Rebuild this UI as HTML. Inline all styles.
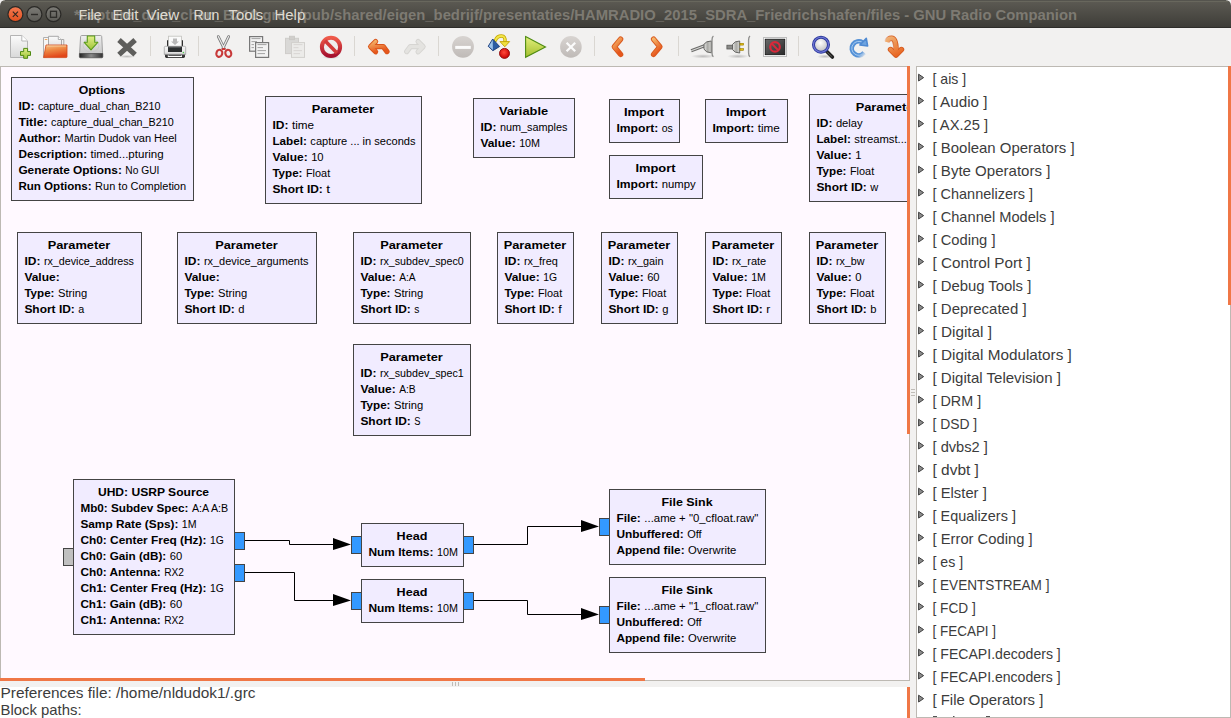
<!DOCTYPE html>
<html><head><meta charset="utf-8"><style>
html,body{margin:0;padding:0;width:1231px;height:718px;overflow:hidden;background:#f2f1f0;}
svg{position:absolute;left:0;top:0;font-family:"Liberation Sans",sans-serif;}
</style></head><body>
<svg width="1231" height="718" viewBox="0 0 1231 718">
<defs>
<linearGradient id="wbC" x1="0" y1="0" x2="0" y2="1"><stop offset="0" stop-color="#f47a52"/><stop offset="1" stop-color="#e2501e"/></linearGradient><linearGradient id="wbG" x1="0" y1="0" x2="0" y2="1"><stop offset="0" stop-color="#7c7b76"/><stop offset="1" stop-color="#5c5b56"/></linearGradient>
<linearGradient id="tb" x1="0" y1="0" x2="0" y2="1"><stop offset="0" stop-color="#5d5b54"/><stop offset="1" stop-color="#3d3c37"/></linearGradient>
</defs>
<rect x="0" y="0" width="1231" height="718" fill="#f2f1f0"/>
<path d="M0,28 L0,6 Q0,0 6,0 L1225,0 Q1231,0 1231,6 L1231,28 Z" fill="url(#tb)"/>
<line x1="5" y1="0.5" x2="1226" y2="0.5" stroke="#55544e" stroke-width="1"/><line x1="3" y1="1.5" x2="1228" y2="1.5" stroke="#68675d" stroke-width="1"/>
<line x1="0" y1="27.5" x2="1231" y2="27.5" stroke="#2e2d2a" stroke-width="1"/>
<!-- window buttons -->
<circle cx="15.4" cy="14.2" r="7.5" fill="url(#wbC)" stroke="#2a2926" stroke-width="1.2"/>
<path d="M12.8,11.6 L18,16.8 M18,11.6 L12.8,16.8" stroke="#2e2620" stroke-width="1.1"/>
<circle cx="34.4" cy="14.2" r="7.5" fill="url(#wbG)" stroke="#2a2926" stroke-width="1.2"/>
<line x1="31" y1="14.5" x2="38" y2="14.5" stroke="#2e2d2a" stroke-width="1.4"/>
<circle cx="53.4" cy="14.2" r="7.5" fill="url(#wbG)" stroke="#2a2926" stroke-width="1.2"/>
<rect x="50.5" y="11.3" width="6" height="6" fill="none" stroke="#2e2d2a" stroke-width="1.3"/>
<text x="74.00" y="20.00" font-size="15.2" font-weight="bold" fill="#7d7a72" text-anchor="start" textLength="1003.00" lengthAdjust="spacingAndGlyphs">*capture_dual_chan_B210.grc - /pub/shared/eigen_bedrijf/presentaties/HAMRADIO_2015_SDRA_Friedrichshafen/files - GNU Radio Companion</text>
<text x="78.50" y="20.00" font-size="14.4" font-weight="normal" fill="#dfdbd2" text-anchor="start" textLength="23.20" lengthAdjust="spacingAndGlyphs">File</text>
<text x="112.50" y="20.00" font-size="14.4" font-weight="normal" fill="#dfdbd2" text-anchor="start" textLength="26.00" lengthAdjust="spacingAndGlyphs">Edit</text>
<text x="146.50" y="20.00" font-size="14.4" font-weight="normal" fill="#dfdbd2" text-anchor="start" textLength="32.81" lengthAdjust="spacingAndGlyphs">View</text>
<text x="193.50" y="20.00" font-size="14.4" font-weight="normal" fill="#dfdbd2" text-anchor="start" textLength="25.88" lengthAdjust="spacingAndGlyphs">Run</text>
<text x="228.50" y="20.00" font-size="14.4" font-weight="normal" fill="#dfdbd2" text-anchor="start" textLength="34.81" lengthAdjust="spacingAndGlyphs">Tools</text>
<text x="274.50" y="20.00" font-size="14.4" font-weight="normal" fill="#dfdbd2" text-anchor="start" textLength="30.73" lengthAdjust="spacingAndGlyphs">Help</text>
<!-- toolbar -->

<defs>
<linearGradient id="gPage" x1="0" y1="0" x2="0" y2="1"><stop offset="0" stop-color="#fbfbfb"/><stop offset="1" stop-color="#d9d9d9"/></linearGradient>
<linearGradient id="gGreen" x1="0" y1="0" x2="0" y2="1"><stop offset="0" stop-color="#e2ef8a"/><stop offset="1" stop-color="#9fc437"/></linearGradient>
<linearGradient id="gFolder" x1="0" y1="0" x2="0.3" y2="1"><stop offset="0" stop-color="#f7c68e"/><stop offset="0.45" stop-color="#ee8a45"/><stop offset="1" stop-color="#e2471a"/></linearGradient>
<linearGradient id="gDrive" x1="0" y1="0" x2="0" y2="1"><stop offset="0" stop-color="#f0f0f0"/><stop offset="1" stop-color="#c8c8c8"/></linearGradient>
<linearGradient id="gDriveBand" x1="0" y1="0" x2="1" y2="0"><stop offset="0" stop-color="#222"/><stop offset="0.5" stop-color="#8a8a8a"/><stop offset="1" stop-color="#333"/></linearGradient>
<linearGradient id="gRed" x1="0" y1="0" x2="0" y2="1"><stop offset="0" stop-color="#ef5a4a"/><stop offset="1" stop-color="#a5102e"/></linearGradient>
<linearGradient id="gOrange" x1="0" y1="0" x2="0.4" y2="1"><stop offset="0" stop-color="#f4b56a"/><stop offset="1" stop-color="#e6561c"/></linearGradient>
<linearGradient id="gGreyC" x1="0" y1="0" x2="0" y2="1"><stop offset="0" stop-color="#d8d4d1"/><stop offset="1" stop-color="#bfbab7"/></linearGradient>
<linearGradient id="gPlay" x1="0" y1="0" x2="0" y2="1"><stop offset="0" stop-color="#e3ef7c"/><stop offset="1" stop-color="#a3bf2e"/></linearGradient>
<linearGradient id="gScreen" x1="0" y1="0" x2="1" y2="1"><stop offset="0" stop-color="#6a6a6a"/><stop offset="1" stop-color="#2a2a2a"/></linearGradient>
<linearGradient id="gPlug" x1="0" y1="0" x2="1" y2="0"><stop offset="0" stop-color="#e8e8e6"/><stop offset="0.5" stop-color="#a8a8a4"/><stop offset="1" stop-color="#d8d8d4"/></linearGradient>
<radialGradient id="gLens" cx="0.45" cy="0.35" r="0.6"><stop offset="0" stop-color="#ffffff"/><stop offset="1" stop-color="#c8c8c8"/></radialGradient>
<radialGradient id="gRedDot" cx="0.45" cy="0.4" r="0.6"><stop offset="0" stop-color="#ff4a3a"/><stop offset="1" stop-color="#c80000"/></radialGradient>
<radialGradient id="gShadow" cx="0.5" cy="0.5" r="0.5"><stop offset="0" stop-color="#000" stop-opacity="0.22"/><stop offset="1" stop-color="#000" stop-opacity="0"/></radialGradient>
</defs>
<g id="icons">
<!-- separators -->
<g stroke="#dad7d2" stroke-width="1">
<line x1="150.5" y1="36" x2="150.5" y2="56"/>
<line x1="198.5" y1="36" x2="198.5" y2="56"/>
<line x1="354.5" y1="36" x2="354.5" y2="56"/>
<line x1="438.5" y1="36" x2="438.5" y2="56"/>
<line x1="594.5" y1="36" x2="594.5" y2="56"/>
<line x1="678.5" y1="36" x2="678.5" y2="56"/>
<line x1="798.5" y1="36" x2="798.5" y2="56"/>
</g>
<!-- new -->
<path d="M10.5,35.5 L21.8,35.5 L27.5,41 L27.5,57.5 L10.5,57.5 Z" fill="url(#gPage)" stroke="#b4b4b4" stroke-width="1"/>
<path d="M21.8,35.5 L21.8,41 L27.5,41" fill="#ffffff" stroke="#b8b8b8" stroke-width="1"/>
<path d="M23.7,48.4 L27.6,48.4 L27.6,51.6 L30.5,51.6 L30.5,55.4 L27.6,55.4 L27.6,58.3 L23.7,58.3 L23.7,55.4 L20.5,55.4 L20.5,51.6 L23.7,51.6 Z" fill="url(#gGreen)" stroke="#4f8a12" stroke-width="1" stroke-linejoin="round"/>
<!-- open -->
<path d="M43.5,37.5 L50,37.5 L50,56 L43.5,57.5 Z" fill="#f6f6f6" stroke="#b0b0b0" stroke-width="1"/>
<rect x="44.8" y="39" width="2.5" height="0.9" fill="#f0a050"/>
<path d="M48.5,36.3 L58.3,36.3 L61.5,39.5 L61.5,50 L48.5,50 Z" fill="url(#gPage)" stroke="#a8a8a8" stroke-width="1"/>
<path d="M58.3,36.3 L58.3,39.5 L61.5,39.5" fill="#fff" stroke="#a8a8a8" stroke-width="0.9"/>
<path d="M61.8,39.5 L63.8,39.5 L63.8,48" fill="none" stroke="#a8a8a8" stroke-width="1"/>
<path d="M46,45 L67,45 L67,56.8 Q67,57.6 66,57.6 L43.6,57.6 Z" fill="url(#gFolder)" stroke="#d2481a" stroke-width="0.8"/>
<path d="M46.6,46 L66,46" stroke="#f8d4a8" stroke-width="0.8"/>
<!-- save (drive) -->
<path d="M81.6,35.5 L100.7,35.5 Q101.5,35.5 101.7,36.5 L102.6,53.5 L79.6,53.5 L80.6,36.5 Q80.8,35.5 81.6,35.5 Z" fill="url(#gDrive)" stroke="#a2a2a2" stroke-width="1"/>
<ellipse cx="91" cy="45.5" rx="8" ry="6.5" fill="none" stroke="#c6c6c6" stroke-width="0.8"/>
<path d="M79.4,53.6 L102.8,53.6 L102.8,56.8 Q102.8,57.8 101.8,57.8 L80.4,57.8 Q79.4,57.8 79.4,56.8 Z" fill="url(#gDriveBand)" stroke="#3a3a3a" stroke-width="0.6"/>
<path d="M87.3,36 L94.7,36 L94.7,42.3 L97.8,42.3 L91,49.8 L84.2,42.3 L87.3,42.3 Z" fill="url(#gGreen)" stroke="#5a9c1a" stroke-width="1.1" stroke-linejoin="round"/>
<!-- close X -->
<ellipse cx="127" cy="56.5" rx="9" ry="1.6" fill="url(#gShadow)"/>
<path d="M119,40 L135.1,54.7 M135.1,40 L119,54.7" stroke="#5e5e5c" stroke-width="5.2" stroke-linecap="butt"/>
<!-- print -->
<rect x="167" y="40" width="16" height="7" fill="#2e2e2e" rx="1"/>
<rect x="168.5" y="36.2" width="13" height="11" fill="#fafafa" stroke="#c0c0bc" stroke-width="0.8"/>
<path d="M173,38.5 L177,38.5 L177,41.5 L179,41.5 L175,45 L171,41.5 L173,41.5 Z" fill="#b8b8b8"/>
<path d="M165,54 L185,54 L185,56.6 Q185,58 183.6,58 L166.4,58 Q165,58 165,56.6 Z" fill="#333"/>
<rect x="167.8" y="55.2" width="14.2" height="1.9" fill="#fff"/>
<rect x="168.6" y="55.2" width="12.6" height="0.7" fill="#222"/>
<linearGradient id="gPrn" x1="0" y1="0" x2="0" y2="1"><stop offset="0" stop-color="#f4f4f4"/><stop offset="0.7" stop-color="#e8e8e8"/><stop offset="1" stop-color="#bdbdbd"/></linearGradient>
<path d="M164.3,47.5 Q164.3,46.3 165.5,46.3 L184.5,46.3 Q185.7,46.3 185.7,47.5 L185.7,54.6 L164.3,54.6 Z" fill="url(#gPrn)" stroke="#9a9a9a" stroke-width="0.7"/>
<rect x="168" y="46.6" width="14" height="5.4" fill="#2c2f30"/>
<rect x="168.6" y="47.2" width="12" height="0.8" fill="#5a5d5e"/>
<circle cx="183.4" cy="52.5" r="0.8" fill="#4ed04e"/>
<!-- cut -->
<path d="M218.3,36.6 L224.2,48.6 M228.6,36.6 L222.8,48.6" stroke="#7a7a7a" stroke-width="2.8" stroke-linecap="round"/>
<path d="M218.3,36.6 L224.2,48.6 M228.6,36.6 L222.8,48.6" stroke="#efefef" stroke-width="1.1" stroke-linecap="round"/>
<ellipse cx="219.3" cy="53.3" rx="2.9" ry="3.6" fill="none" stroke="#c83a3a" stroke-width="2.1" transform="rotate(20 219.3 53.3)"/>
<ellipse cx="228.3" cy="53.3" rx="2.9" ry="3.6" fill="none" stroke="#c83a3a" stroke-width="2.1" transform="rotate(-20 228.3 53.3)"/>
<path d="M222,49 L225.5,49" stroke="#c83a3a" stroke-width="2"/>
<!-- copy -->
<rect x="249.6" y="36.6" width="13" height="14.6" fill="#f2f2f2" stroke="#787878" stroke-width="1.2"/>
<g stroke="#9a9a9a" stroke-width="0.9"><line x1="251.5" y1="38.6" x2="260.5" y2="38.6"/><line x1="251.5" y1="41.6" x2="257" y2="41.6"/><line x1="251.5" y1="44.6" x2="254" y2="44.6"/><line x1="251.5" y1="47.6" x2="254" y2="47.6"/></g>
<rect x="255.6" y="42.6" width="13" height="14.8" fill="#f2f2f2" stroke="#787878" stroke-width="1.2"/>
<g stroke="#9a9a9a" stroke-width="0.9"><line x1="257.5" y1="44.6" x2="266.5" y2="44.6"/><line x1="257.5" y1="47.6" x2="263" y2="47.6"/><line x1="257.5" y1="50.6" x2="266" y2="50.6"/><line x1="257.5" y1="53.6" x2="265" y2="53.6"/></g>
<!-- paste disabled -->
<rect x="285.5" y="38.3" width="13" height="15.3" fill="#d9d8d6" stroke="#cfcdca" stroke-width="1"/>
<rect x="289.5" y="36.2" width="5" height="3.5" fill="#d0cecb" stroke="#c8c6c3" stroke-width="0.8"/>
<rect x="291.5" y="42.6" width="13" height="14.8" fill="#ecebe9" stroke="#d2d0cd" stroke-width="1"/>
<g stroke="#d6d4d1" stroke-width="0.9"><line x1="293.5" y1="44.6" x2="302.5" y2="44.6"/><line x1="293.5" y1="47.6" x2="298.5" y2="47.6"/><line x1="293.5" y1="50.6" x2="302" y2="50.6"/><line x1="293.5" y1="53.6" x2="300" y2="53.6"/></g>
<!-- delete (stop) -->
<ellipse cx="331" cy="57.2" rx="9" ry="1.8" fill="url(#gShadow)"/>
<circle cx="331" cy="46.9" r="9.1" fill="#eeeeee" stroke="url(#gRed)" stroke-width="4"/>
<path d="M325,40.8 L337,53" stroke="#d23a3a" stroke-width="3.6"/>
<!-- undo -->
<path d="M370.8,46.6 L383.3,46.6 L387,51.6 M375.6,41.6 L370.6,46.6 L375.6,51.8" fill="none" stroke="#d9541a" stroke-width="5.2" stroke-linecap="round" stroke-linejoin="round"/>
<path d="M370.8,46.6 L383.3,46.6 L387,51.6 M375.6,41.6 L370.6,46.6 L375.6,51.8" fill="none" stroke="url(#gOrange)" stroke-width="3.4" stroke-linecap="round" stroke-linejoin="round"/>
<!-- redo disabled -->
<path d="M422.9,46.6 L410.4,46.6 L406.7,51.6 M418.1,41.6 L423.1,46.6 L418.1,51.8" fill="none" stroke="#d6d5d2" stroke-width="5.2" stroke-linecap="round" stroke-linejoin="round"/>
<path d="M422.9,46.6 L410.4,46.6 L406.7,51.6 M418.1,41.6 L423.1,46.6 L418.1,51.8" fill="none" stroke="#e4e3e0" stroke-width="3.4" stroke-linecap="round" stroke-linejoin="round"/>
<!-- minus disabled -->
<circle cx="463" cy="46.8" r="10.9" fill="url(#gGreyC)"/>
<rect x="455.2" y="45.9" width="15.6" height="3" fill="#fbfbfb"/>
<!-- generate -->
<path d="M495.5,40.2 Q497,36 501.5,36 Q505.5,36 505,41.5" fill="none" stroke="#c6a800" stroke-width="3.4" stroke-linecap="round"/>
<path d="M495.5,40.2 Q497,36 501.5,36 Q505.5,36 505,41.5" fill="none" stroke="#f2e64a" stroke-width="1.8" stroke-linecap="round"/>
<path d="M500,41.6 L509.6,41.6 L504.8,46.8 Z" fill="#f0e040" stroke="#c0a000" stroke-width="0.9" stroke-linejoin="round"/>
<path d="M488.2,46.3 L492.7,39 L499.6,46.5 L492.9,50.7 Z" fill="#2b5ca2" stroke="#1b3a78" stroke-width="0.9" stroke-linejoin="round"/>
<path d="M488.8,46.3 L492.7,39.8 L492.9,50 Z" fill="#9cc2ea"/>
<circle cx="504.5" cy="53.4" r="5" fill="url(#gRedDot)" stroke="#8a0a0a" stroke-width="0.9"/>
<!-- play -->
<path d="M525.6,36.6 L545.5,46.9 L525.6,57.3 Z" fill="url(#gPlay)" stroke="#4f8c12" stroke-width="1.1" stroke-linejoin="miter"/>
<!-- kill disabled -->
<circle cx="570.9" cy="46.9" r="10.8" fill="url(#gGreyC)"/>
<path d="M566.6,42.8 L575.2,51.2 M575.2,42.8 L566.6,51.2" stroke="#fbfbfb" stroke-width="2.3"/>
<!-- chevrons -->
<path d="M620.6,39.2 L614.3,46.8 L620.6,54.4" fill="none" stroke="#d9581c" stroke-width="5.4" stroke-linecap="round" stroke-linejoin="round"/>
<path d="M620.6,39.2 L614.3,46.8 L620.6,54.4" fill="none" stroke="url(#gOrange)" stroke-width="3.6" stroke-linecap="round" stroke-linejoin="round"/>
<path d="M653.6,39.2 L659.9,46.8 L653.6,54.4" fill="none" stroke="#d9581c" stroke-width="5.4" stroke-linecap="round" stroke-linejoin="round"/>
<path d="M653.6,39.2 L659.9,46.8 L653.6,54.4" fill="none" stroke="url(#gOrange)" stroke-width="3.6" stroke-linecap="round" stroke-linejoin="round"/>
<!-- unplug (connected) -->
<ellipse cx="703" cy="56.3" rx="12" ry="2.2" fill="url(#gShadow)"/>
<path d="M691.2,50.7 L704.5,45.8" stroke="#6a6a68" stroke-width="3.2"/>
<path d="M691.2,50.7 L704.5,45.8" stroke="#d8d8d6" stroke-width="1.2"/>
<path d="M704,44.2 Q706,41 711.3,41 L711.3,52.8 Q706,52.8 704,49.2 Z" fill="url(#gPlug)" stroke="#5a5a58" stroke-width="0.9"/>
<path d="M713.4,36 Q712,37 712,40 L712,53 Q712,56 713.4,56.8" fill="none" stroke="#8a8a88" stroke-width="1.3"/>
<!-- plug -->
<ellipse cx="738" cy="56.3" rx="11" ry="2.2" fill="url(#gShadow)"/>
<rect x="726.9" y="45.2" width="6" height="3.8" fill="#8a8a88" stroke="#5a5a58" stroke-width="0.8"/>
<path d="M732.5,44.4 Q734.5,41 739.7,41 L739.7,53 Q734.5,53 732.5,49.6 Z" fill="url(#gPlug)" stroke="#5a5a58" stroke-width="0.9"/>
<rect x="740" y="43.3" width="3.6" height="1.8" fill="#e0c010" stroke="#9a7a00" stroke-width="0.6"/>
<rect x="740" y="48.6" width="3.6" height="1.8" fill="#e0c010" stroke="#9a7a00" stroke-width="0.6"/>
<path d="M750,36 Q748.6,37 748.6,40 L748.6,53 Q748.6,56 750,56.8" fill="none" stroke="#8a8a88" stroke-width="1.3"/>
<path d="M747.6,40 L747.6,53" stroke="#e8e8e6" stroke-width="1"/>
<!-- error screen -->
<rect x="763.5" y="37.5" width="23" height="19" fill="#ffffff" stroke="#bdbdbd" stroke-width="1"/>
<rect x="765.2" y="39.2" width="19.6" height="15.5" fill="url(#gScreen)" stroke="#111" stroke-width="0.8"/>
<circle cx="775" cy="46.9" r="4.8" fill="none" stroke="#d8283a" stroke-width="2.2"/>
<path d="M771.8,43.6 L778.2,50.2" stroke="#d8283a" stroke-width="2"/>
<!-- find -->
<ellipse cx="825" cy="56.5" rx="8" ry="2" fill="url(#gShadow)"/>
<path d="M826.6,51.2 L832.4,57" stroke="#222" stroke-width="3.6" stroke-linecap="round"/>
<path d="M827.4,52.4 L831.8,56.6" stroke="#6a6a60" stroke-width="0.8"/>
<circle cx="821" cy="44.7" r="6.4" fill="url(#gLens)"/>
<circle cx="821" cy="44.7" r="7.5" fill="none" stroke="#2c3a9c" stroke-width="3"/>
<circle cx="821" cy="44.7" r="7.5" fill="none" stroke="#7076d6" stroke-width="1.1"/>
<!-- refresh -->
<linearGradient id="gFade" gradientUnits="userSpaceOnUse" x1="866" y1="55" x2="856" y2="46"><stop offset="0" stop-color="#5591d6" stop-opacity="0"/><stop offset="0.4" stop-color="#5591d6" stop-opacity="1"/></linearGradient>
<linearGradient id="gFade2" gradientUnits="userSpaceOnUse" x1="866" y1="55" x2="856" y2="46"><stop offset="0" stop-color="#a6cbf2" stop-opacity="0"/><stop offset="0.4" stop-color="#a6cbf2" stop-opacity="1"/></linearGradient>
<path d="M864.2,52.8 A7,7 0 1 1 862.5,42.4" fill="none" stroke="url(#gFade)" stroke-width="4.7"/>
<path d="M864.2,52.8 A7,7 0 1 1 862.5,42.4" fill="none" stroke="url(#gFade2)" stroke-width="1"/>
<path d="M866.3,38.4 L867.6,46 L859.9,45 Z" fill="#6ea4e0" stroke="#4f8ad2" stroke-width="1.6" stroke-linejoin="round"/>
<!-- forward/down arrow -->
<linearGradient id="gOr2" gradientUnits="userSpaceOnUse" x1="886" y1="36" x2="896" y2="57"><stop offset="0" stop-color="#f2bd80"/><stop offset="1" stop-color="#e8621e"/></linearGradient>
<linearGradient id="gTail" gradientUnits="userSpaceOnUse" x1="885" y1="42" x2="891" y2="38"><stop offset="0" stop-color="#d65a1e" stop-opacity="0.1"/><stop offset="1" stop-color="#d65a1e" stop-opacity="1"/></linearGradient>
<path d="M886.8,42 Q888,38.2 891.6,38.2 Q896,38.4 896,50" fill="none" stroke="url(#gTail)" stroke-width="5.6" stroke-linecap="butt"/>
<path d="M890.6,49.6 L896,55 L901.4,49.6" fill="none" stroke="#d65a1e" stroke-width="5.6" stroke-linecap="round" stroke-linejoin="round"/>
<path d="M886.8,42 Q888,38.2 891.6,38.2 Q896,38.4 896,50" fill="none" stroke="url(#gOr2)" stroke-width="3.8" stroke-linecap="butt" opacity="0.95"/>
<path d="M890.6,49.6 L896,55 L901.4,49.6" fill="none" stroke="url(#gOr2)" stroke-width="3.8" stroke-linecap="round" stroke-linejoin="round"/>
<path d="M896,46 L896,53" stroke="url(#gOr2)" stroke-width="3.8"/>
</g>

<!-- canvas -->
<clipPath id="cc"><rect x="1" y="67" width="908" height="613"/></clipPath><rect x="0.5" y="66.5" width="909" height="614" fill="#fff9ff" stroke="#bdb9b3" stroke-width="1"/><g clip-path="url(#cc)"><rect x="11.5" y="77.5" width="182" height="123" fill="#f1ecff" stroke="#444444" stroke-width="1"/>
<text x="102.00" y="93.60" font-size="10.8" font-weight="bold" fill="#000" text-anchor="middle" textLength="46.41" lengthAdjust="spacingAndGlyphs">Options</text>
<text x="18.40" y="109.60" font-size="10.2" font-weight="bold" fill="#000" text-anchor="start" textLength="16.02" lengthAdjust="spacingAndGlyphs">ID:</text>
<text x="37.90" y="109.60" font-size="10.0" font-weight="normal" fill="#000" text-anchor="start" textLength="122.58" lengthAdjust="spacingAndGlyphs">capture_dual_chan_B210</text>
<text x="18.40" y="125.60" font-size="10.2" font-weight="bold" fill="#000" text-anchor="start" textLength="29.23" lengthAdjust="spacingAndGlyphs">Title:</text>
<text x="51.12" y="125.60" font-size="10.0" font-weight="normal" fill="#000" text-anchor="start" textLength="122.58" lengthAdjust="spacingAndGlyphs">capture_dual_chan_B210</text>
<text x="18.40" y="141.60" font-size="10.2" font-weight="bold" fill="#000" text-anchor="start" textLength="42.58" lengthAdjust="spacingAndGlyphs">Author:</text>
<text x="64.46" y="141.60" font-size="10.0" font-weight="normal" fill="#000" text-anchor="start" textLength="112.36" lengthAdjust="spacingAndGlyphs">Martin Dudok van Heel</text>
<text x="18.40" y="157.60" font-size="10.2" font-weight="bold" fill="#000" text-anchor="start" textLength="68.67" lengthAdjust="spacingAndGlyphs">Description:</text>
<text x="90.56" y="157.60" font-size="10.0" font-weight="normal" fill="#000" text-anchor="start" textLength="73.12" lengthAdjust="spacingAndGlyphs">timed...pturing</text>
<text x="18.40" y="173.60" font-size="10.2" font-weight="bold" fill="#000" text-anchor="start" textLength="103.44" lengthAdjust="spacingAndGlyphs">Generate Options:</text>
<text x="125.32" y="173.60" font-size="10.0" font-weight="normal" fill="#000" text-anchor="start" textLength="34.09" lengthAdjust="spacingAndGlyphs">No GUI</text>
<text x="18.40" y="189.60" font-size="10.2" font-weight="bold" fill="#000" text-anchor="start" textLength="73.25" lengthAdjust="spacingAndGlyphs">Run Options:</text>
<text x="95.13" y="189.60" font-size="10.0" font-weight="normal" fill="#000" text-anchor="start" textLength="90.97" lengthAdjust="spacingAndGlyphs">Run to Completion</text>
<rect x="265.5" y="96.5" width="156" height="107" fill="#f1ecff" stroke="#444444" stroke-width="1"/>
<text x="343.00" y="112.60" font-size="10.8" font-weight="bold" fill="#000" text-anchor="middle" textLength="62.70" lengthAdjust="spacingAndGlyphs">Parameter</text>
<text x="272.40" y="128.60" font-size="10.2" font-weight="bold" fill="#000" text-anchor="start" textLength="16.02" lengthAdjust="spacingAndGlyphs">ID:</text>
<text x="291.90" y="128.60" font-size="10.0" font-weight="normal" fill="#000" text-anchor="start" textLength="22.14" lengthAdjust="spacingAndGlyphs">time</text>
<text x="272.40" y="144.60" font-size="10.2" font-weight="bold" fill="#000" text-anchor="start" textLength="34.48" lengthAdjust="spacingAndGlyphs">Label:</text>
<text x="310.37" y="144.60" font-size="10.0" font-weight="normal" fill="#000" text-anchor="start" textLength="105.14" lengthAdjust="spacingAndGlyphs">capture ... in seconds</text>
<text x="272.40" y="160.60" font-size="10.2" font-weight="bold" fill="#000" text-anchor="start" textLength="35.27" lengthAdjust="spacingAndGlyphs">Value:</text>
<text x="311.15" y="160.60" font-size="10.0" font-weight="normal" fill="#000" text-anchor="start" textLength="12.47" lengthAdjust="spacingAndGlyphs">10</text>
<text x="272.40" y="176.60" font-size="10.2" font-weight="bold" fill="#000" text-anchor="start" textLength="30.09" lengthAdjust="spacingAndGlyphs">Type:</text>
<text x="305.98" y="176.60" font-size="10.0" font-weight="normal" fill="#000" text-anchor="start" textLength="24.20" lengthAdjust="spacingAndGlyphs">Float</text>
<text x="272.40" y="192.60" font-size="10.2" font-weight="bold" fill="#000" text-anchor="start" textLength="50.42" lengthAdjust="spacingAndGlyphs">Short ID:</text>
<text x="326.31" y="192.60" font-size="10.0" font-weight="normal" fill="#000" text-anchor="start" textLength="3.84" lengthAdjust="spacingAndGlyphs">t</text>
<rect x="473.5" y="98.5" width="101" height="59" fill="#f1ecff" stroke="#444444" stroke-width="1"/>
<text x="523.50" y="114.60" font-size="10.8" font-weight="bold" fill="#000" text-anchor="middle" textLength="49.17" lengthAdjust="spacingAndGlyphs">Variable</text>
<text x="480.40" y="130.60" font-size="10.2" font-weight="bold" fill="#000" text-anchor="start" textLength="16.02" lengthAdjust="spacingAndGlyphs">ID:</text>
<text x="499.90" y="130.60" font-size="10.0" font-weight="normal" fill="#000" text-anchor="start" textLength="67.59" lengthAdjust="spacingAndGlyphs">num_samples</text>
<text x="480.40" y="146.60" font-size="10.2" font-weight="bold" fill="#000" text-anchor="start" textLength="35.27" lengthAdjust="spacingAndGlyphs">Value:</text>
<text x="519.15" y="146.60" font-size="10.0" font-weight="normal" fill="#000" text-anchor="start" textLength="20.92" lengthAdjust="spacingAndGlyphs">10M</text>
<rect x="609.5" y="99.5" width="70" height="43" fill="#f1ecff" stroke="#444444" stroke-width="1"/>
<text x="644.00" y="115.60" font-size="10.8" font-weight="bold" fill="#000" text-anchor="middle" textLength="40.11" lengthAdjust="spacingAndGlyphs">Import</text>
<text x="616.40" y="131.60" font-size="10.2" font-weight="bold" fill="#000" text-anchor="start" textLength="41.89" lengthAdjust="spacingAndGlyphs">Import:</text>
<text x="661.77" y="131.60" font-size="10.0" font-weight="normal" fill="#000" text-anchor="start" textLength="11.11" lengthAdjust="spacingAndGlyphs">os</text>
<rect x="705.5" y="99.5" width="82" height="43" fill="#f1ecff" stroke="#444444" stroke-width="1"/>
<text x="746.00" y="115.60" font-size="10.8" font-weight="bold" fill="#000" text-anchor="middle" textLength="40.11" lengthAdjust="spacingAndGlyphs">Import</text>
<text x="712.40" y="131.60" font-size="10.2" font-weight="bold" fill="#000" text-anchor="start" textLength="41.89" lengthAdjust="spacingAndGlyphs">Import:</text>
<text x="757.77" y="131.60" font-size="10.0" font-weight="normal" fill="#000" text-anchor="start" textLength="22.14" lengthAdjust="spacingAndGlyphs">time</text>
<rect x="609.5" y="155.5" width="93" height="43" fill="#f1ecff" stroke="#444444" stroke-width="1"/>
<text x="655.50" y="171.60" font-size="10.8" font-weight="bold" fill="#000" text-anchor="middle" textLength="40.11" lengthAdjust="spacingAndGlyphs">Import</text>
<text x="616.40" y="187.60" font-size="10.2" font-weight="bold" fill="#000" text-anchor="start" textLength="41.89" lengthAdjust="spacingAndGlyphs">Import:</text>
<text x="661.77" y="187.60" font-size="10.0" font-weight="normal" fill="#000" text-anchor="start" textLength="33.97" lengthAdjust="spacingAndGlyphs">numpy</text>
<rect x="809.5" y="94.5" width="156" height="107" fill="#f1ecff" stroke="#444444" stroke-width="1"/>
<text x="887.00" y="110.60" font-size="10.8" font-weight="bold" fill="#000" text-anchor="middle" textLength="62.70" lengthAdjust="spacingAndGlyphs">Parameter</text>
<text x="816.40" y="126.60" font-size="10.2" font-weight="bold" fill="#000" text-anchor="start" textLength="16.02" lengthAdjust="spacingAndGlyphs">ID:</text>
<text x="835.90" y="126.60" font-size="10.0" font-weight="normal" fill="#000" text-anchor="start" textLength="26.77" lengthAdjust="spacingAndGlyphs">delay</text>
<text x="816.40" y="142.60" font-size="10.2" font-weight="bold" fill="#000" text-anchor="start" textLength="34.48" lengthAdjust="spacingAndGlyphs">Label:</text>
<text x="854.37" y="142.60" font-size="10.0" font-weight="normal" fill="#000" text-anchor="start" textLength="52.62" lengthAdjust="spacingAndGlyphs">streamst...</text>
<text x="816.40" y="158.60" font-size="10.2" font-weight="bold" fill="#000" text-anchor="start" textLength="35.27" lengthAdjust="spacingAndGlyphs">Value:</text>
<text x="855.15" y="158.60" font-size="10.0" font-weight="normal" fill="#000" text-anchor="start" textLength="6.23" lengthAdjust="spacingAndGlyphs">1</text>
<text x="816.40" y="174.60" font-size="10.2" font-weight="bold" fill="#000" text-anchor="start" textLength="30.09" lengthAdjust="spacingAndGlyphs">Type:</text>
<text x="849.98" y="174.60" font-size="10.0" font-weight="normal" fill="#000" text-anchor="start" textLength="24.20" lengthAdjust="spacingAndGlyphs">Float</text>
<text x="816.40" y="190.60" font-size="10.2" font-weight="bold" fill="#000" text-anchor="start" textLength="50.42" lengthAdjust="spacingAndGlyphs">Short ID:</text>
<text x="870.31" y="190.60" font-size="10.0" font-weight="normal" fill="#000" text-anchor="start" textLength="8.02" lengthAdjust="spacingAndGlyphs">w</text>
<rect x="17.5" y="232.5" width="124" height="91" fill="#f1ecff" stroke="#444444" stroke-width="1"/>
<text x="79.00" y="248.60" font-size="10.8" font-weight="bold" fill="#000" text-anchor="middle" textLength="62.70" lengthAdjust="spacingAndGlyphs">Parameter</text>
<text x="24.40" y="264.60" font-size="10.2" font-weight="bold" fill="#000" text-anchor="start" textLength="16.02" lengthAdjust="spacingAndGlyphs">ID:</text>
<text x="43.90" y="264.60" font-size="10.0" font-weight="normal" fill="#000" text-anchor="start" textLength="90.06" lengthAdjust="spacingAndGlyphs">rx_device_address</text>
<text x="24.40" y="280.60" font-size="10.2" font-weight="bold" fill="#000" text-anchor="start" textLength="35.27" lengthAdjust="spacingAndGlyphs">Value:</text>
<text x="24.40" y="296.60" font-size="10.2" font-weight="bold" fill="#000" text-anchor="start" textLength="30.09" lengthAdjust="spacingAndGlyphs">Type:</text>
<text x="57.98" y="296.60" font-size="10.0" font-weight="normal" fill="#000" text-anchor="start" textLength="29.23" lengthAdjust="spacingAndGlyphs">String</text>
<text x="24.40" y="312.60" font-size="10.2" font-weight="bold" fill="#000" text-anchor="start" textLength="50.42" lengthAdjust="spacingAndGlyphs">Short ID:</text>
<text x="78.31" y="312.60" font-size="10.0" font-weight="normal" fill="#000" text-anchor="start" textLength="6.00" lengthAdjust="spacingAndGlyphs">a</text>
<rect x="177.5" y="232.5" width="139" height="91" fill="#f1ecff" stroke="#444444" stroke-width="1"/>
<text x="246.50" y="248.60" font-size="10.8" font-weight="bold" fill="#000" text-anchor="middle" textLength="62.70" lengthAdjust="spacingAndGlyphs">Parameter</text>
<text x="184.40" y="264.60" font-size="10.2" font-weight="bold" fill="#000" text-anchor="start" textLength="16.02" lengthAdjust="spacingAndGlyphs">ID:</text>
<text x="203.90" y="264.60" font-size="10.0" font-weight="normal" fill="#000" text-anchor="start" textLength="104.58" lengthAdjust="spacingAndGlyphs">rx_device_arguments</text>
<text x="184.40" y="280.60" font-size="10.2" font-weight="bold" fill="#000" text-anchor="start" textLength="35.27" lengthAdjust="spacingAndGlyphs">Value:</text>
<text x="184.40" y="296.60" font-size="10.2" font-weight="bold" fill="#000" text-anchor="start" textLength="30.09" lengthAdjust="spacingAndGlyphs">Type:</text>
<text x="217.98" y="296.60" font-size="10.0" font-weight="normal" fill="#000" text-anchor="start" textLength="29.23" lengthAdjust="spacingAndGlyphs">String</text>
<text x="184.40" y="312.60" font-size="10.2" font-weight="bold" fill="#000" text-anchor="start" textLength="50.42" lengthAdjust="spacingAndGlyphs">Short ID:</text>
<text x="238.31" y="312.60" font-size="10.0" font-weight="normal" fill="#000" text-anchor="start" textLength="6.22" lengthAdjust="spacingAndGlyphs">d</text>
<rect x="353.5" y="232.5" width="117" height="91" fill="#f1ecff" stroke="#444444" stroke-width="1"/>
<text x="411.50" y="248.60" font-size="10.8" font-weight="bold" fill="#000" text-anchor="middle" textLength="62.70" lengthAdjust="spacingAndGlyphs">Parameter</text>
<text x="360.40" y="264.60" font-size="10.2" font-weight="bold" fill="#000" text-anchor="start" textLength="16.02" lengthAdjust="spacingAndGlyphs">ID:</text>
<text x="379.90" y="264.60" font-size="10.0" font-weight="normal" fill="#000" text-anchor="start" textLength="83.94" lengthAdjust="spacingAndGlyphs">rx_subdev_spec0</text>
<text x="360.40" y="280.60" font-size="10.2" font-weight="bold" fill="#000" text-anchor="start" textLength="35.27" lengthAdjust="spacingAndGlyphs">Value:</text>
<text x="399.15" y="280.60" font-size="10.0" font-weight="normal" fill="#000" text-anchor="start" textLength="16.53" lengthAdjust="spacingAndGlyphs">A:A</text>
<text x="360.40" y="296.60" font-size="10.2" font-weight="bold" fill="#000" text-anchor="start" textLength="30.09" lengthAdjust="spacingAndGlyphs">Type:</text>
<text x="393.98" y="296.60" font-size="10.0" font-weight="normal" fill="#000" text-anchor="start" textLength="29.23" lengthAdjust="spacingAndGlyphs">String</text>
<text x="360.40" y="312.60" font-size="10.2" font-weight="bold" fill="#000" text-anchor="start" textLength="50.42" lengthAdjust="spacingAndGlyphs">Short ID:</text>
<text x="414.31" y="312.60" font-size="10.0" font-weight="normal" fill="#000" text-anchor="start" textLength="5.11" lengthAdjust="spacingAndGlyphs">s</text>
<rect x="497.5" y="232.5" width="76" height="91" fill="#f1ecff" stroke="#444444" stroke-width="1"/>
<text x="535.00" y="248.60" font-size="10.8" font-weight="bold" fill="#000" text-anchor="middle" textLength="62.70" lengthAdjust="spacingAndGlyphs">Parameter</text>
<text x="504.40" y="264.60" font-size="10.2" font-weight="bold" fill="#000" text-anchor="start" textLength="16.02" lengthAdjust="spacingAndGlyphs">ID:</text>
<text x="523.90" y="264.60" font-size="10.0" font-weight="normal" fill="#000" text-anchor="start" textLength="33.98" lengthAdjust="spacingAndGlyphs">rx_freq</text>
<text x="504.40" y="280.60" font-size="10.2" font-weight="bold" fill="#000" text-anchor="start" textLength="35.27" lengthAdjust="spacingAndGlyphs">Value:</text>
<text x="543.15" y="280.60" font-size="10.0" font-weight="normal" fill="#000" text-anchor="start" textLength="13.83" lengthAdjust="spacingAndGlyphs">1G</text>
<text x="504.40" y="296.60" font-size="10.2" font-weight="bold" fill="#000" text-anchor="start" textLength="30.09" lengthAdjust="spacingAndGlyphs">Type:</text>
<text x="537.98" y="296.60" font-size="10.0" font-weight="normal" fill="#000" text-anchor="start" textLength="24.20" lengthAdjust="spacingAndGlyphs">Float</text>
<text x="504.40" y="312.60" font-size="10.2" font-weight="bold" fill="#000" text-anchor="start" textLength="50.42" lengthAdjust="spacingAndGlyphs">Short ID:</text>
<text x="558.31" y="312.60" font-size="10.0" font-weight="normal" fill="#000" text-anchor="start" textLength="3.45" lengthAdjust="spacingAndGlyphs">f</text>
<rect x="601.5" y="232.5" width="76" height="91" fill="#f1ecff" stroke="#444444" stroke-width="1"/>
<text x="639.00" y="248.60" font-size="10.8" font-weight="bold" fill="#000" text-anchor="middle" textLength="62.70" lengthAdjust="spacingAndGlyphs">Parameter</text>
<text x="608.40" y="264.60" font-size="10.2" font-weight="bold" fill="#000" text-anchor="start" textLength="16.02" lengthAdjust="spacingAndGlyphs">ID:</text>
<text x="627.90" y="264.60" font-size="10.0" font-weight="normal" fill="#000" text-anchor="start" textLength="35.61" lengthAdjust="spacingAndGlyphs">rx_gain</text>
<text x="608.40" y="280.60" font-size="10.2" font-weight="bold" fill="#000" text-anchor="start" textLength="35.27" lengthAdjust="spacingAndGlyphs">Value:</text>
<text x="647.15" y="280.60" font-size="10.0" font-weight="normal" fill="#000" text-anchor="start" textLength="12.47" lengthAdjust="spacingAndGlyphs">60</text>
<text x="608.40" y="296.60" font-size="10.2" font-weight="bold" fill="#000" text-anchor="start" textLength="30.09" lengthAdjust="spacingAndGlyphs">Type:</text>
<text x="641.98" y="296.60" font-size="10.0" font-weight="normal" fill="#000" text-anchor="start" textLength="24.20" lengthAdjust="spacingAndGlyphs">Float</text>
<text x="608.40" y="312.60" font-size="10.2" font-weight="bold" fill="#000" text-anchor="start" textLength="50.42" lengthAdjust="spacingAndGlyphs">Short ID:</text>
<text x="662.31" y="312.60" font-size="10.0" font-weight="normal" fill="#000" text-anchor="start" textLength="6.22" lengthAdjust="spacingAndGlyphs">g</text>
<rect x="705.5" y="232.5" width="76" height="91" fill="#f1ecff" stroke="#444444" stroke-width="1"/>
<text x="743.00" y="248.60" font-size="10.8" font-weight="bold" fill="#000" text-anchor="middle" textLength="62.70" lengthAdjust="spacingAndGlyphs">Parameter</text>
<text x="712.40" y="264.60" font-size="10.2" font-weight="bold" fill="#000" text-anchor="start" textLength="16.02" lengthAdjust="spacingAndGlyphs">ID:</text>
<text x="731.90" y="264.60" font-size="10.0" font-weight="normal" fill="#000" text-anchor="start" textLength="34.38" lengthAdjust="spacingAndGlyphs">rx_rate</text>
<text x="712.40" y="280.60" font-size="10.2" font-weight="bold" fill="#000" text-anchor="start" textLength="35.27" lengthAdjust="spacingAndGlyphs">Value:</text>
<text x="751.15" y="280.60" font-size="10.0" font-weight="normal" fill="#000" text-anchor="start" textLength="14.69" lengthAdjust="spacingAndGlyphs">1M</text>
<text x="712.40" y="296.60" font-size="10.2" font-weight="bold" fill="#000" text-anchor="start" textLength="30.09" lengthAdjust="spacingAndGlyphs">Type:</text>
<text x="745.98" y="296.60" font-size="10.0" font-weight="normal" fill="#000" text-anchor="start" textLength="24.20" lengthAdjust="spacingAndGlyphs">Float</text>
<text x="712.40" y="312.60" font-size="10.2" font-weight="bold" fill="#000" text-anchor="start" textLength="50.42" lengthAdjust="spacingAndGlyphs">Short ID:</text>
<text x="766.31" y="312.60" font-size="10.0" font-weight="normal" fill="#000" text-anchor="start" textLength="4.03" lengthAdjust="spacingAndGlyphs">r</text>
<rect x="809.5" y="232.5" width="76" height="91" fill="#f1ecff" stroke="#444444" stroke-width="1"/>
<text x="847.00" y="248.60" font-size="10.8" font-weight="bold" fill="#000" text-anchor="middle" textLength="62.70" lengthAdjust="spacingAndGlyphs">Parameter</text>
<text x="816.40" y="264.60" font-size="10.2" font-weight="bold" fill="#000" text-anchor="start" textLength="16.02" lengthAdjust="spacingAndGlyphs">ID:</text>
<text x="835.90" y="264.60" font-size="10.0" font-weight="normal" fill="#000" text-anchor="start" textLength="28.70" lengthAdjust="spacingAndGlyphs">rx_bw</text>
<text x="816.40" y="280.60" font-size="10.2" font-weight="bold" fill="#000" text-anchor="start" textLength="35.27" lengthAdjust="spacingAndGlyphs">Value:</text>
<text x="855.15" y="280.60" font-size="10.0" font-weight="normal" fill="#000" text-anchor="start" textLength="6.23" lengthAdjust="spacingAndGlyphs">0</text>
<text x="816.40" y="296.60" font-size="10.2" font-weight="bold" fill="#000" text-anchor="start" textLength="30.09" lengthAdjust="spacingAndGlyphs">Type:</text>
<text x="849.98" y="296.60" font-size="10.0" font-weight="normal" fill="#000" text-anchor="start" textLength="24.20" lengthAdjust="spacingAndGlyphs">Float</text>
<text x="816.40" y="312.60" font-size="10.2" font-weight="bold" fill="#000" text-anchor="start" textLength="50.42" lengthAdjust="spacingAndGlyphs">Short ID:</text>
<text x="870.31" y="312.60" font-size="10.0" font-weight="normal" fill="#000" text-anchor="start" textLength="6.22" lengthAdjust="spacingAndGlyphs">b</text>
<rect x="353.5" y="344.5" width="117" height="91" fill="#f1ecff" stroke="#444444" stroke-width="1"/>
<text x="411.50" y="360.60" font-size="10.8" font-weight="bold" fill="#000" text-anchor="middle" textLength="62.70" lengthAdjust="spacingAndGlyphs">Parameter</text>
<text x="360.40" y="376.60" font-size="10.2" font-weight="bold" fill="#000" text-anchor="start" textLength="16.02" lengthAdjust="spacingAndGlyphs">ID:</text>
<text x="379.90" y="376.60" font-size="10.0" font-weight="normal" fill="#000" text-anchor="start" textLength="83.94" lengthAdjust="spacingAndGlyphs">rx_subdev_spec1</text>
<text x="360.40" y="392.60" font-size="10.2" font-weight="bold" fill="#000" text-anchor="start" textLength="35.27" lengthAdjust="spacingAndGlyphs">Value:</text>
<text x="399.15" y="392.60" font-size="10.0" font-weight="normal" fill="#000" text-anchor="start" textLength="16.55" lengthAdjust="spacingAndGlyphs">A:B</text>
<text x="360.40" y="408.60" font-size="10.2" font-weight="bold" fill="#000" text-anchor="start" textLength="30.09" lengthAdjust="spacingAndGlyphs">Type:</text>
<text x="393.98" y="408.60" font-size="10.0" font-weight="normal" fill="#000" text-anchor="start" textLength="29.23" lengthAdjust="spacingAndGlyphs">String</text>
<text x="360.40" y="424.60" font-size="10.2" font-weight="bold" fill="#000" text-anchor="start" textLength="50.42" lengthAdjust="spacingAndGlyphs">Short ID:</text>
<text x="414.31" y="424.60" font-size="10.0" font-weight="normal" fill="#000" text-anchor="start" textLength="6.22" lengthAdjust="spacingAndGlyphs">S</text>
<rect x="73.5" y="479.5" width="161" height="155" fill="#f1ecff" stroke="#444444" stroke-width="1"/>
<text x="153.50" y="495.60" font-size="10.8" font-weight="bold" fill="#000" text-anchor="middle" textLength="111.17" lengthAdjust="spacingAndGlyphs">UHD: USRP Source</text>
<text x="80.40" y="511.60" font-size="10.2" font-weight="bold" fill="#000" text-anchor="start" textLength="108.03" lengthAdjust="spacingAndGlyphs">Mb0: Subdev Spec:</text>
<text x="191.92" y="511.60" font-size="10.0" font-weight="normal" fill="#000" text-anchor="start" textLength="36.19" lengthAdjust="spacingAndGlyphs">A:A A:B</text>
<text x="80.40" y="527.60" font-size="10.2" font-weight="bold" fill="#000" text-anchor="start" textLength="97.98" lengthAdjust="spacingAndGlyphs">Samp Rate (Sps):</text>
<text x="181.87" y="527.60" font-size="10.0" font-weight="normal" fill="#000" text-anchor="start" textLength="14.69" lengthAdjust="spacingAndGlyphs">1M</text>
<text x="80.40" y="543.60" font-size="10.2" font-weight="bold" fill="#000" text-anchor="start" textLength="126.05" lengthAdjust="spacingAndGlyphs">Ch0: Center Freq (Hz):</text>
<text x="209.93" y="543.60" font-size="10.0" font-weight="normal" fill="#000" text-anchor="start" textLength="13.83" lengthAdjust="spacingAndGlyphs">1G</text>
<text x="80.40" y="559.60" font-size="10.2" font-weight="bold" fill="#000" text-anchor="start" textLength="85.83" lengthAdjust="spacingAndGlyphs">Ch0: Gain (dB):</text>
<text x="169.71" y="559.60" font-size="10.0" font-weight="normal" fill="#000" text-anchor="start" textLength="12.47" lengthAdjust="spacingAndGlyphs">60</text>
<text x="80.40" y="575.60" font-size="10.2" font-weight="bold" fill="#000" text-anchor="start" textLength="80.33" lengthAdjust="spacingAndGlyphs">Ch0: Antenna:</text>
<text x="164.21" y="575.60" font-size="10.0" font-weight="normal" fill="#000" text-anchor="start" textLength="19.77" lengthAdjust="spacingAndGlyphs">RX2</text>
<text x="80.40" y="591.60" font-size="10.2" font-weight="bold" fill="#000" text-anchor="start" textLength="126.05" lengthAdjust="spacingAndGlyphs">Ch1: Center Freq (Hz):</text>
<text x="209.93" y="591.60" font-size="10.0" font-weight="normal" fill="#000" text-anchor="start" textLength="13.83" lengthAdjust="spacingAndGlyphs">1G</text>
<text x="80.40" y="607.60" font-size="10.2" font-weight="bold" fill="#000" text-anchor="start" textLength="85.83" lengthAdjust="spacingAndGlyphs">Ch1: Gain (dB):</text>
<text x="169.71" y="607.60" font-size="10.0" font-weight="normal" fill="#000" text-anchor="start" textLength="12.47" lengthAdjust="spacingAndGlyphs">60</text>
<text x="80.40" y="623.60" font-size="10.2" font-weight="bold" fill="#000" text-anchor="start" textLength="80.33" lengthAdjust="spacingAndGlyphs">Ch1: Antenna:</text>
<text x="164.21" y="623.60" font-size="10.0" font-weight="normal" fill="#000" text-anchor="start" textLength="19.77" lengthAdjust="spacingAndGlyphs">RX2</text>
<rect x="63.5" y="548.5" width="10" height="17" fill="#c0c0c0" stroke="#444444" stroke-width="1"/>
<rect x="234.5" y="532.5" width="10" height="17" fill="#3399ff" stroke="#444444" stroke-width="1"/>
<rect x="234.5" y="564.5" width="10" height="17" fill="#3399ff" stroke="#444444" stroke-width="1"/>
<rect x="361.5" y="523.5" width="102" height="43" fill="#f1ecff" stroke="#444444" stroke-width="1"/>
<text x="412.00" y="539.60" font-size="10.8" font-weight="bold" fill="#000" text-anchor="middle" textLength="30.78" lengthAdjust="spacingAndGlyphs">Head</text>
<text x="368.40" y="555.60" font-size="10.2" font-weight="bold" fill="#000" text-anchor="start" textLength="65.06" lengthAdjust="spacingAndGlyphs">Num Items:</text>
<text x="436.95" y="555.60" font-size="10.0" font-weight="normal" fill="#000" text-anchor="start" textLength="20.92" lengthAdjust="spacingAndGlyphs">10M</text>
<rect x="361.5" y="579.5" width="102" height="43" fill="#f1ecff" stroke="#444444" stroke-width="1"/>
<text x="412.00" y="595.60" font-size="10.8" font-weight="bold" fill="#000" text-anchor="middle" textLength="30.78" lengthAdjust="spacingAndGlyphs">Head</text>
<text x="368.40" y="611.60" font-size="10.2" font-weight="bold" fill="#000" text-anchor="start" textLength="65.06" lengthAdjust="spacingAndGlyphs">Num Items:</text>
<text x="436.95" y="611.60" font-size="10.0" font-weight="normal" fill="#000" text-anchor="start" textLength="20.92" lengthAdjust="spacingAndGlyphs">10M</text>
<rect x="351.5" y="536.5" width="10" height="17" fill="#3399ff" stroke="#444444" stroke-width="1"/>
<rect x="463.5" y="536.5" width="10" height="17" fill="#3399ff" stroke="#444444" stroke-width="1"/>
<rect x="351.5" y="592.5" width="10" height="17" fill="#3399ff" stroke="#444444" stroke-width="1"/>
<rect x="463.5" y="592.5" width="10" height="17" fill="#3399ff" stroke="#444444" stroke-width="1"/>
<rect x="609.5" y="489.5" width="156" height="75" fill="#f1ecff" stroke="#444444" stroke-width="1"/>
<text x="687.00" y="505.60" font-size="10.8" font-weight="bold" fill="#000" text-anchor="middle" textLength="51.20" lengthAdjust="spacingAndGlyphs">File Sink</text>
<text x="616.40" y="521.60" font-size="10.2" font-weight="bold" fill="#000" text-anchor="start" textLength="24.45" lengthAdjust="spacingAndGlyphs">File:</text>
<text x="644.34" y="521.60" font-size="10.0" font-weight="normal" fill="#000" text-anchor="start" textLength="114.03" lengthAdjust="spacingAndGlyphs">...ame + &quot;0_cfloat.raw&quot;</text>
<text x="616.40" y="537.60" font-size="10.2" font-weight="bold" fill="#000" text-anchor="start" textLength="67.28" lengthAdjust="spacingAndGlyphs">Unbuffered:</text>
<text x="687.17" y="537.60" font-size="10.0" font-weight="normal" fill="#000" text-anchor="start" textLength="14.47" lengthAdjust="spacingAndGlyphs">Off</text>
<text x="616.40" y="553.60" font-size="10.2" font-weight="bold" fill="#000" text-anchor="start" textLength="68.20" lengthAdjust="spacingAndGlyphs">Append file:</text>
<text x="688.09" y="553.60" font-size="10.0" font-weight="normal" fill="#000" text-anchor="start" textLength="48.22" lengthAdjust="spacingAndGlyphs">Overwrite</text>
<rect x="609.5" y="577.5" width="156" height="75" fill="#f1ecff" stroke="#444444" stroke-width="1"/>
<text x="687.00" y="593.60" font-size="10.8" font-weight="bold" fill="#000" text-anchor="middle" textLength="51.20" lengthAdjust="spacingAndGlyphs">File Sink</text>
<text x="616.40" y="609.60" font-size="10.2" font-weight="bold" fill="#000" text-anchor="start" textLength="24.45" lengthAdjust="spacingAndGlyphs">File:</text>
<text x="644.34" y="609.60" font-size="10.0" font-weight="normal" fill="#000" text-anchor="start" textLength="114.03" lengthAdjust="spacingAndGlyphs">...ame + &quot;1_cfloat.raw&quot;</text>
<text x="616.40" y="625.60" font-size="10.2" font-weight="bold" fill="#000" text-anchor="start" textLength="67.28" lengthAdjust="spacingAndGlyphs">Unbuffered:</text>
<text x="687.17" y="625.60" font-size="10.0" font-weight="normal" fill="#000" text-anchor="start" textLength="14.47" lengthAdjust="spacingAndGlyphs">Off</text>
<text x="616.40" y="641.60" font-size="10.2" font-weight="bold" fill="#000" text-anchor="start" textLength="68.20" lengthAdjust="spacingAndGlyphs">Append file:</text>
<text x="688.09" y="641.60" font-size="10.0" font-weight="normal" fill="#000" text-anchor="start" textLength="48.22" lengthAdjust="spacingAndGlyphs">Overwrite</text>
<rect x="599.5" y="518.5" width="10" height="17" fill="#3399ff" stroke="#444444" stroke-width="1"/>
<rect x="599.5" y="606.5" width="10" height="17" fill="#3399ff" stroke="#444444" stroke-width="1"/>
<polyline points="245,540.5 289.5,540.5 289.5,544.5 333,544.5" fill="none" stroke="#000" stroke-width="1"/>
<polygon points="333,538 333,550 351,544.5" fill="#000"/>
<polyline points="245,572.5 294.5,572.5 294.5,600.5 333,600.5" fill="none" stroke="#000" stroke-width="1"/>
<polygon points="333,594 333,606 351,600.5" fill="#000"/>
<polyline points="474,544.5 527.5,544.5 527.5,526.5 581,526.5" fill="none" stroke="#000" stroke-width="1"/>
<polygon points="581,520 581,532 599,526.5" fill="#000"/>
<polyline points="474,600.5 527.5,600.5 527.5,614.5 581,614.5" fill="none" stroke="#000" stroke-width="1"/>
<polygon points="581,608 581,620 599,614.5" fill="#000"/></g>
<rect x="907" y="66" width="3" height="368" fill="#f07746"/>
<rect x="0" y="678" width="645" height="3" fill="#f07746"/>
<g fill="#bfbcb7"><rect x="452" y="682" width="1" height="4"/><rect x="455" y="682" width="1" height="4"/><rect x="458" y="682" width="1" height="4"/>
<rect x="911" y="389" width="4" height="1"/><rect x="911" y="392" width="4" height="1"/><rect x="911" y="395" width="4" height="1"/></g>
<!-- log -->
<rect x="0" y="687" width="910" height="31" fill="#ffffff"/>
<rect x="907" y="687" width="3" height="31" fill="#f07746"/>
<text x="0.50" y="698.30" font-size="14.6" font-weight="normal" fill="#3c3c3c" text-anchor="start" textLength="255.00" lengthAdjust="spacingAndGlyphs">Preferences file: /home/nldudok1/.grc</text>
<text x="0.50" y="715.30" font-size="14.6" font-weight="normal" fill="#3c3c3c" text-anchor="start" textLength="81.12" lengthAdjust="spacingAndGlyphs">Block paths:</text>
<!-- tree panel -->
<rect x="916.5" y="66.5" width="314" height="651" fill="#ffffff" stroke="#bdb9b3" stroke-width="1"/>
<svg x="917" y="67" width="313" height="650" viewBox="917 67 313 650">
<polygon points="918.6,74.2 918.6,81.0 923.6,77.6" fill="#8c8c8c" stroke="#3e3e3e" stroke-width="1" stroke-linejoin="miter"/>
<text x="932.50" y="84.00" font-size="14.4" font-weight="normal" fill="#3c3c3c" text-anchor="start" textLength="33.72" lengthAdjust="spacingAndGlyphs">[ ais ]</text>
<polygon points="918.6,97.2 918.6,104.0 923.6,100.6" fill="#8c8c8c" stroke="#3e3e3e" stroke-width="1" stroke-linejoin="miter"/>
<text x="932.50" y="107.00" font-size="14.4" font-weight="normal" fill="#3c3c3c" text-anchor="start" textLength="55.05" lengthAdjust="spacingAndGlyphs">[ Audio ]</text>
<polygon points="918.6,120.2 918.6,127.0 923.6,123.6" fill="#8c8c8c" stroke="#3e3e3e" stroke-width="1" stroke-linejoin="miter"/>
<text x="932.50" y="130.00" font-size="14.4" font-weight="normal" fill="#3c3c3c" text-anchor="start" textLength="55.70" lengthAdjust="spacingAndGlyphs">[ AX.25 ]</text>
<polygon points="918.6,143.2 918.6,150.0 923.6,146.6" fill="#8c8c8c" stroke="#3e3e3e" stroke-width="1" stroke-linejoin="miter"/>
<text x="932.50" y="153.00" font-size="14.4" font-weight="normal" fill="#3c3c3c" text-anchor="start" textLength="142.15" lengthAdjust="spacingAndGlyphs">[ Boolean Operators ]</text>
<polygon points="918.6,166.2 918.6,173.0 923.6,169.6" fill="#8c8c8c" stroke="#3e3e3e" stroke-width="1" stroke-linejoin="miter"/>
<text x="932.50" y="176.00" font-size="14.4" font-weight="normal" fill="#3c3c3c" text-anchor="start" textLength="117.83" lengthAdjust="spacingAndGlyphs">[ Byte Operators ]</text>
<polygon points="918.6,189.2 918.6,196.0 923.6,192.6" fill="#8c8c8c" stroke="#3e3e3e" stroke-width="1" stroke-linejoin="miter"/>
<text x="932.50" y="199.00" font-size="14.4" font-weight="normal" fill="#3c3c3c" text-anchor="start" textLength="100.53" lengthAdjust="spacingAndGlyphs">[ Channelizers ]</text>
<polygon points="918.6,212.2 918.6,219.0 923.6,215.6" fill="#8c8c8c" stroke="#3e3e3e" stroke-width="1" stroke-linejoin="miter"/>
<text x="932.50" y="222.00" font-size="14.4" font-weight="normal" fill="#3c3c3c" text-anchor="start" textLength="122.08" lengthAdjust="spacingAndGlyphs">[ Channel Models ]</text>
<polygon points="918.6,235.2 918.6,242.0 923.6,238.6" fill="#8c8c8c" stroke="#3e3e3e" stroke-width="1" stroke-linejoin="miter"/>
<text x="932.50" y="245.00" font-size="14.4" font-weight="normal" fill="#3c3c3c" text-anchor="start" textLength="62.98" lengthAdjust="spacingAndGlyphs">[ Coding ]</text>
<polygon points="918.6,258.2 918.6,265.0 923.6,261.6" fill="#8c8c8c" stroke="#3e3e3e" stroke-width="1" stroke-linejoin="miter"/>
<text x="932.50" y="268.00" font-size="14.4" font-weight="normal" fill="#3c3c3c" text-anchor="start" textLength="98.27" lengthAdjust="spacingAndGlyphs">[ Control Port ]</text>
<polygon points="918.6,281.2 918.6,288.0 923.6,284.6" fill="#8c8c8c" stroke="#3e3e3e" stroke-width="1" stroke-linejoin="miter"/>
<text x="932.50" y="291.00" font-size="14.4" font-weight="normal" fill="#3c3c3c" text-anchor="start" textLength="98.79" lengthAdjust="spacingAndGlyphs">[ Debug Tools ]</text>
<polygon points="918.6,304.2 918.6,311.0 923.6,307.6" fill="#8c8c8c" stroke="#3e3e3e" stroke-width="1" stroke-linejoin="miter"/>
<text x="932.50" y="314.00" font-size="14.4" font-weight="normal" fill="#3c3c3c" text-anchor="start" textLength="94.10" lengthAdjust="spacingAndGlyphs">[ Deprecated ]</text>
<polygon points="918.6,327.2 918.6,334.0 923.6,330.6" fill="#8c8c8c" stroke="#3e3e3e" stroke-width="1" stroke-linejoin="miter"/>
<text x="932.50" y="337.00" font-size="14.4" font-weight="normal" fill="#3c3c3c" text-anchor="start" textLength="59.47" lengthAdjust="spacingAndGlyphs">[ Digital ]</text>
<polygon points="918.6,350.2 918.6,357.0 923.6,353.6" fill="#8c8c8c" stroke="#3e3e3e" stroke-width="1" stroke-linejoin="miter"/>
<text x="932.50" y="360.00" font-size="14.4" font-weight="normal" fill="#3c3c3c" text-anchor="start" textLength="139.36" lengthAdjust="spacingAndGlyphs">[ Digital Modulators ]</text>
<polygon points="918.6,373.2 918.6,380.0 923.6,376.6" fill="#8c8c8c" stroke="#3e3e3e" stroke-width="1" stroke-linejoin="miter"/>
<text x="932.50" y="383.00" font-size="14.4" font-weight="normal" fill="#3c3c3c" text-anchor="start" textLength="128.43" lengthAdjust="spacingAndGlyphs">[ Digital Television ]</text>
<polygon points="918.6,396.2 918.6,403.0 923.6,399.6" fill="#8c8c8c" stroke="#3e3e3e" stroke-width="1" stroke-linejoin="miter"/>
<text x="932.50" y="406.00" font-size="14.4" font-weight="normal" fill="#3c3c3c" text-anchor="start" textLength="48.62" lengthAdjust="spacingAndGlyphs">[ DRM ]</text>
<polygon points="918.6,419.2 918.6,426.0 923.6,422.6" fill="#8c8c8c" stroke="#3e3e3e" stroke-width="1" stroke-linejoin="miter"/>
<text x="932.50" y="429.00" font-size="14.4" font-weight="normal" fill="#3c3c3c" text-anchor="start" textLength="44.74" lengthAdjust="spacingAndGlyphs">[ DSD ]</text>
<polygon points="918.6,442.2 918.6,449.0 923.6,445.6" fill="#8c8c8c" stroke="#3e3e3e" stroke-width="1" stroke-linejoin="miter"/>
<text x="932.50" y="452.00" font-size="14.4" font-weight="normal" fill="#3c3c3c" text-anchor="start" textLength="55.38" lengthAdjust="spacingAndGlyphs">[ dvbs2 ]</text>
<polygon points="918.6,465.2 918.6,472.0 923.6,468.6" fill="#8c8c8c" stroke="#3e3e3e" stroke-width="1" stroke-linejoin="miter"/>
<text x="932.50" y="475.00" font-size="14.4" font-weight="normal" fill="#3c3c3c" text-anchor="start" textLength="46.43" lengthAdjust="spacingAndGlyphs">[ dvbt ]</text>
<polygon points="918.6,488.2 918.6,495.0 923.6,491.6" fill="#8c8c8c" stroke="#3e3e3e" stroke-width="1" stroke-linejoin="miter"/>
<text x="932.50" y="498.00" font-size="14.4" font-weight="normal" fill="#3c3c3c" text-anchor="start" textLength="54.25" lengthAdjust="spacingAndGlyphs">[ Elster ]</text>
<polygon points="918.6,511.2 918.6,518.0 923.6,514.6" fill="#8c8c8c" stroke="#3e3e3e" stroke-width="1" stroke-linejoin="miter"/>
<text x="932.50" y="521.00" font-size="14.4" font-weight="normal" fill="#3c3c3c" text-anchor="start" textLength="83.39" lengthAdjust="spacingAndGlyphs">[ Equalizers ]</text>
<polygon points="918.6,534.2 918.6,541.0 923.6,537.6" fill="#8c8c8c" stroke="#3e3e3e" stroke-width="1" stroke-linejoin="miter"/>
<text x="932.50" y="544.00" font-size="14.4" font-weight="normal" fill="#3c3c3c" text-anchor="start" textLength="100.10" lengthAdjust="spacingAndGlyphs">[ Error Coding ]</text>
<polygon points="918.6,557.2 918.6,564.0 923.6,560.6" fill="#8c8c8c" stroke="#3e3e3e" stroke-width="1" stroke-linejoin="miter"/>
<text x="932.50" y="567.00" font-size="14.4" font-weight="normal" fill="#3c3c3c" text-anchor="start" textLength="30.70" lengthAdjust="spacingAndGlyphs">[ es ]</text>
<polygon points="918.6,580.2 918.6,587.0 923.6,583.6" fill="#8c8c8c" stroke="#3e3e3e" stroke-width="1" stroke-linejoin="miter"/>
<text x="932.50" y="590.00" font-size="14.4" font-weight="normal" fill="#3c3c3c" text-anchor="start" textLength="116.98" lengthAdjust="spacingAndGlyphs">[ EVENTSTREAM ]</text>
<polygon points="918.6,603.2 918.6,610.0 923.6,606.6" fill="#8c8c8c" stroke="#3e3e3e" stroke-width="1" stroke-linejoin="miter"/>
<text x="932.50" y="613.00" font-size="14.4" font-weight="normal" fill="#3c3c3c" text-anchor="start" textLength="43.37" lengthAdjust="spacingAndGlyphs">[ FCD ]</text>
<polygon points="918.6,626.2 918.6,633.0 923.6,629.6" fill="#8c8c8c" stroke="#3e3e3e" stroke-width="1" stroke-linejoin="miter"/>
<text x="932.50" y="636.00" font-size="14.4" font-weight="normal" fill="#3c3c3c" text-anchor="start" textLength="63.59" lengthAdjust="spacingAndGlyphs">[ FECAPI ]</text>
<polygon points="918.6,649.2 918.6,656.0 923.6,652.6" fill="#8c8c8c" stroke="#3e3e3e" stroke-width="1" stroke-linejoin="miter"/>
<text x="932.50" y="659.00" font-size="14.4" font-weight="normal" fill="#3c3c3c" text-anchor="start" textLength="128.28" lengthAdjust="spacingAndGlyphs">[ FECAPI.decoders ]</text>
<polygon points="918.6,672.2 918.6,679.0 923.6,675.6" fill="#8c8c8c" stroke="#3e3e3e" stroke-width="1" stroke-linejoin="miter"/>
<text x="932.50" y="682.00" font-size="14.4" font-weight="normal" fill="#3c3c3c" text-anchor="start" textLength="128.07" lengthAdjust="spacingAndGlyphs">[ FECAPI.encoders ]</text>
<polygon points="918.6,695.2 918.6,702.0 923.6,698.6" fill="#8c8c8c" stroke="#3e3e3e" stroke-width="1" stroke-linejoin="miter"/>
<text x="932.50" y="705.00" font-size="14.4" font-weight="normal" fill="#3c3c3c" text-anchor="start" textLength="110.80" lengthAdjust="spacingAndGlyphs">[ File Operators ]</text>
<polygon points="918.6,718.2 918.6,725.0 923.6,721.6" fill="#8c8c8c" stroke="#3e3e3e" stroke-width="1" stroke-linejoin="miter"/>
<text x="932.50" y="728.00" font-size="14.4" font-weight="normal" fill="#3c3c3c" text-anchor="start" textLength="57.31" lengthAdjust="spacingAndGlyphs">[ Filters ]</text>
<g fill="#555"><rect x="933" y="716" width="4" height="1"/><rect x="953" y="716" width="1.5" height="1"/><rect x="986" y="716" width="4" height="1"/></g>
</svg>
<rect x="1228" y="66" width="3" height="239" fill="#f07746"/>
</svg>
</body></html>
